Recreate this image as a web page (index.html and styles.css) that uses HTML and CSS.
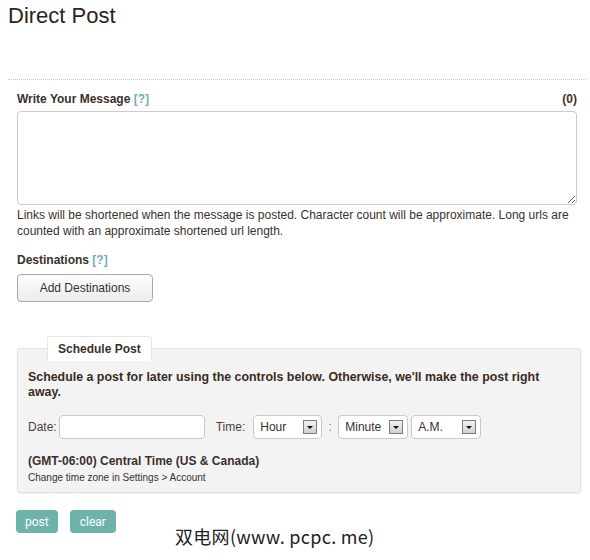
FILE: index.html
```html
<!DOCTYPE html>
<html>
<head>
<meta charset="utf-8">
<link rel="stylesheet" href="styles.css">
</head>
<body>
<h1 class="title">Direct Post</h1>
<div class="divider"></div>
<div class="form">
  <div class="label-row">
    <span class="label">Write Your Message <span class="help">[?]</span></span>
    <span class="label">(0)</span>
  </div>
  <textarea class="message"></textarea>
  <p class="note">Links will be shortened when the message is posted. Character count will be approximate. Long urls are counted with an approximate shortened url length.</p>
  <div class="label dest-label">Destinations <span class="help">[?]</span></div>
  <button class="add-btn">Add Destinations</button>

  <fieldset class="schedule">
    <legend class="legend">Schedule Post</legend>
    <p class="sched-text">Schedule a post for later using the controls below. Otherwise, we'll make the post right away.</p>
    <div class="time-row">
      <span class="field-label">Date:</span>
      <input class="date-input" type="text">
      <span class="field-label time-label">Time:</span>
      <span class="select sel-hour">Hour<span class="arrow"></span></span>
      <span class="colon">:</span>
      <span class="select sel-min">Minute<span class="arrow"></span></span>
      <span class="select sel-ampm">A.M.<span class="arrow"></span></span>
    </div>
    <div class="tz">(GMT-06:00) Central Time (US &amp; Canada)</div>
    <div class="tz-note">Change time zone in Settings &gt; Account</div>
  </fieldset>

  <div class="actions">
    <button class="act-btn">post</button>
    <button class="act-btn clear-btn">clear</button>
  </div>
</div>
<div class="watermark">双电网(www. pcpc. me)</div>
</body>
</html>
```
FILE: styles.css
```css
html, body {
  margin: 0;
  padding: 0;
  background: #fff;
}
body {
  position: relative;
  width: 590px;
  height: 560px;
  overflow: hidden;
  font-family: "Liberation Sans", Arial, sans-serif;
  color: #3a312c;
  padding: 0 8px;
  box-sizing: border-box;
}
.title {
  font-size: 22px;
  font-weight: normal;
  line-height: 26px;
  margin: 3px 0 0;
  color: #2b2420;
}
.divider {
  margin: 50px -4px 0 0;
  border-top: 1px dotted #c8c8c8;
}
.form {
  padding: 0 5px 0 9px;
}
.label-row {
  display: flex;
  justify-content: space-between;
  margin-top: 11px;
}
.label {
  font-size: 12px;
  font-weight: bold;
  line-height: 16px;
  color: #3a312c;
}
.help {
  color: #6fb0b6;
  font-weight: bold;
}
.message {
  display: block;
  box-sizing: border-box;
  width: 560px;
  height: 94px;
  margin-top: 4px;
  border: 1px solid #cbcbcb;
  border-radius: 4px;
  resize: vertical;
  background: #fff;
}
.note {
  margin: 2px 0 0;
  font-size: 12px;
  line-height: 16px;
  color: #3a312c;
}
.dest-label {
  margin-top: 13px;
}
.add-btn {
  display: block;
  margin-top: 6px;
  width: 136px;
  height: 28px;
  border: 1px solid #a9a9a9;
  border-radius: 4px;
  background: linear-gradient(#fdfdfd, #ececec);
  font-family: "Liberation Sans", Arial, sans-serif;
  font-size: 12px;
  color: #333;
  padding: 0;
}
.schedule {
  margin: 34px -4px 0 0;
  padding: 0 10px 8px;
  border: 1px solid #e2e2e2;
  border-radius: 3px;
  background: #f3f3f3;
  box-shadow: 0 1px 2px rgba(0,0,0,0.06);
}
.legend {
  margin-left: 19px;
  padding: 0 10px;
  height: 25px;
  line-height: 24px;
  box-sizing: border-box;
  background: #fff;
  border: 1px solid #e6e6e6;
  border-bottom: none;
  border-radius: 3px 3px 0 0;
  font-size: 12px;
  font-weight: bold;
  color: #3a312c;
}
.sched-text {
  margin: 9px 0 0;
  font-size: 12.4px;
  font-weight: bold;
  line-height: 15px;
  color: #3a2a22;
}
.time-row {
  display: flex;
  align-items: center;
  margin-top: 15px;
  height: 24px;
}
.field-label {
  font-size: 12px;
  color: #4a423d;
}
.date-input {
  box-sizing: border-box;
  width: 146px;
  height: 24px;
  margin: 0 11px 0 2px;
  border: 1px solid #c9c9c9;
  border-radius: 4px;
  background: #fff;
}
.time-label {
  margin-right: 8px;
}
.select {
  display: flex;
  align-items: center;
  justify-content: space-between;
  box-sizing: border-box;
  height: 24px;
  padding: 0 3px 0 6px;
  border: 1px solid #c9c9c9;
  border-radius: 4px;
  background: #fff;
  font-size: 12px;
  color: #3a312c;
}
.sel-hour { width: 69px; }
.sel-min { width: 70px; padding-left: 6px; }
.sel-ampm { width: 70px; margin-left: 3px; }
.arrow {
  position: relative;
  width: 14px;
  height: 14px;
  box-sizing: border-box;
  border: 1px solid #7d7d7d;
  background: linear-gradient(#f2f2f2, #cfcfcf);
  margin-right: 1px;
}
.arrow::after {
  content: "";
  position: absolute;
  left: 3px;
  top: 5px;
  border-left: 3px solid transparent;
  border-right: 3px solid transparent;
  border-top: 3px solid #111;
}
.colon {
  width: 16px;
  text-align: center;
  font-size: 12px;
  color: #777;
}
.tz {
  margin-top: 15px;
  font-size: 12px;
  font-weight: bold;
  line-height: 15px;
  color: #3a312c;
}
.tz-note {
  margin-top: 2px;
  font-size: 10px;
  line-height: 13px;
  color: #3a312c;
}
.actions {
  display: flex;
  gap: 12px;
  margin: 17px 0 0 -1px;
}
.act-btn {
  height: 23px;
  padding: 0 9px;
  border: none;
  border-radius: 4px;
  background: #6db3ab;
  color: #fff;
  font-family: Roboto, "Liberation Sans", sans-serif;
  font-size: 12px;
}
.clear-btn {
  padding: 0 10px;
}
.watermark {
  position: absolute;
  left: 175px;
  top: 524px;
  font-family: "Noto Sans CJK SC", "DejaVu Sans", sans-serif;
  font-size: 18px;
  line-height: 24px;
  color: #222;
  letter-spacing: 0.3px;
}
```
